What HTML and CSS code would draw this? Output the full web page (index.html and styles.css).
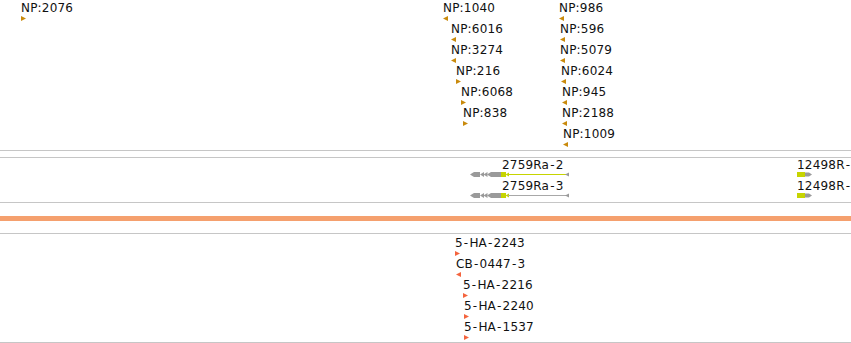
FILE: index.html
```html
<!DOCTYPE html>
<html>
<head>
<meta charset="utf-8">
<link rel="stylesheet" href="styles.css">
</head>
<body>
<div class="browser">
  <section class="track track-np">
    <div class="feat" style="left:21px;top:1px"><div class="lbl">NP:2076</div><svg class="tri np" width="5" height="5"><polygon points="0,0 5,2.5 0,5"/></svg></div>
    <div class="feat" style="left:443px;top:1px"><div class="lbl">NP:1040</div><svg class="tri np" width="5" height="5"><polygon points="5,0 0,2.5 5,5"/></svg></div>
    <div class="feat" style="left:559px;top:1px"><div class="lbl">NP:986</div><svg class="tri np" width="5" height="5"><polygon points="5,0 0,2.5 5,5"/></svg></div>
    <div class="feat" style="left:451px;top:22px"><div class="lbl">NP:6016</div><svg class="tri np" width="5" height="5"><polygon points="5,0 0,2.5 5,5"/></svg></div>
    <div class="feat" style="left:560px;top:22px"><div class="lbl">NP:596</div><svg class="tri np" width="5" height="5"><polygon points="5,0 0,2.5 5,5"/></svg></div>
    <div class="feat" style="left:451px;top:43px"><div class="lbl">NP:3274</div><svg class="tri np" width="5" height="5"><polygon points="5,0 0,2.5 5,5"/></svg></div>
    <div class="feat" style="left:560px;top:43px"><div class="lbl">NP:5079</div><svg class="tri np" width="5" height="5"><polygon points="5,0 0,2.5 5,5"/></svg></div>
    <div class="feat" style="left:456px;top:64px"><div class="lbl">NP:216</div><svg class="tri np" width="5" height="5"><polygon points="0,0 5,2.5 0,5"/></svg></div>
    <div class="feat" style="left:561px;top:64px"><div class="lbl">NP:6024</div><svg class="tri np" width="5" height="5"><polygon points="5,0 0,2.5 5,5"/></svg></div>
    <div class="feat" style="left:461px;top:85px"><div class="lbl">NP:6068</div><svg class="tri np" width="5" height="5"><polygon points="0,0 5,2.5 0,5"/></svg></div>
    <div class="feat" style="left:562px;top:85px"><div class="lbl">NP:945</div><svg class="tri np" width="5" height="5"><polygon points="5,0 0,2.5 5,5"/></svg></div>
    <div class="feat" style="left:463px;top:106px"><div class="lbl">NP:838</div><svg class="tri np" width="5" height="5"><polygon points="0,0 5,2.5 0,5"/></svg></div>
    <div class="feat" style="left:562px;top:106px"><div class="lbl">NP:2188</div><svg class="tri np" width="5" height="5"><polygon points="5,0 0,2.5 5,5"/></svg></div>
    <div class="feat" style="left:563px;top:127px"><div class="lbl">NP:1009</div><svg class="tri np" width="5" height="5"><polygon points="5,0 0,2.5 5,5"/></svg></div>
  </section>
  <div class="divider"></div>
  <section class="track track-genes">
    <div class="feat" style="left:470px;top:0px">
      <div class="lbl" style="margin-left:32px">2759Ra<span class="d">-</span>2</div>
      <svg class="gene" width="100" height="5" viewBox="0 0 100 5">
        <polygon class="g" points="0,2.5 4,0 10,0 10,5 4,5"/>
        <polygon class="g" points="10,2.5 14,0 14,5"/>
        <polygon class="g" points="13.5,2.5 17.5,0 17.5,5"/>
        <polygon class="g" points="17,2.5 21,0 21,5"/>
        <rect class="g" x="21" y="0" width="10" height="5"/>
        <rect class="y" x="31" y="0" width="5" height="5"/>
        <polygon class="y" points="35.5,2.5 39,0.5 39,4.5"/>
        <rect class="y" x="38" y="2" width="58" height="1"/>
        <polygon class="g" points="95,2.5 99,0.5 99,4.5"/>
      </svg>
    </div>
    <div class="feat" style="left:470px;top:21px">
      <div class="lbl" style="margin-left:32px">2759Ra<span class="d">-</span>3</div>
      <svg class="gene" width="100" height="5" viewBox="0 0 100 5">
        <polygon class="g" points="0,2.5 4,0 10,0 10,5 4,5"/>
        <polygon class="g" points="10,2.5 14,0 14,5"/>
        <polygon class="g" points="13.5,2.5 17.5,0 17.5,5"/>
        <polygon class="g" points="17,2.5 21,0 21,5"/>
        <rect class="g" x="21" y="0" width="10" height="5"/>
        <rect class="y" x="31" y="0" width="5" height="5"/>
        <polygon class="y" points="35.5,2.5 39,0.5 39,4.5"/>
        <rect class="l" x="38" y="2" width="58" height="1"/>
        <polygon class="g" points="95,2.5 99,0.5 99,4.5"/>
      </svg>
    </div>
    <div class="feat" style="left:797px;top:0px">
      <div class="lbl">12498R<span class="d">-</span></div>
      <svg class="gene" width="16" height="5" viewBox="0 0 16 5">
        <rect class="y" x="0" y="0" width="8" height="5"/>
        <polygon class="g" points="8,0.5 12,0.5 15,2.5 12,4.5 8,4.5"/>
      </svg>
    </div>
    <div class="feat" style="left:797px;top:21px">
      <div class="lbl">12498R<span class="d">-</span></div>
      <svg class="gene" width="16" height="5" viewBox="0 0 16 5">
        <rect class="y" x="0" y="0" width="8" height="5"/>
        <polygon class="g" points="8,0.5 12,0.5 15,2.5 12,4.5 8,4.5"/>
      </svg>
    </div>
  </section>
  <div class="band-area"><div class="band"></div></div>
  <section class="track track-ha">
    <div class="feat" style="left:455px;top:2px"><div class="lbl">5<span class="d">-</span>HA<span class="d">-</span>2243</div><svg class="tri ha" width="5" height="5"><polygon points="0,0 5,2.5 0,5"/></svg></div>
    <div class="feat" style="left:456px;top:23px"><div class="lbl">CB<span class="d">-</span>0447<span class="d">-</span>3</div><svg class="tri ha" width="5" height="5"><polygon points="5,0 0,2.5 5,5"/></svg></div>
    <div class="feat" style="left:463px;top:44px"><div class="lbl">5<span class="d">-</span>HA<span class="d">-</span>2216</div><svg class="tri ha" width="5" height="5"><polygon points="0,0 5,2.5 0,5"/></svg></div>
    <div class="feat" style="left:464px;top:65px"><div class="lbl">5<span class="d">-</span>HA<span class="d">-</span>2240</div><svg class="tri ha" width="5" height="5"><polygon points="0,0 5,2.5 0,5"/></svg></div>
    <div class="feat" style="left:464px;top:86px"><div class="lbl">5<span class="d">-</span>HA<span class="d">-</span>1537</div><svg class="tri ha" width="5" height="5"><polygon points="0,0 5,2.5 0,5"/></svg></div>
  </section>
</div>
</body>
</html>
```

FILE: styles.css
```css
html, body {
  margin: 0;
  padding: 0;
  background: #fff;
  overflow: hidden;
}
body {
  width: 851px;
  height: 343px;
  font-family: "DejaVu Sans", Verdana, sans-serif;
  font-size: 12px;
  color: #111;
}
.browser {
  display: flex;
  flex-direction: column;
  width: 851px;
}
.track {
  position: relative;
  overflow: hidden;
  border-bottom: 1px solid #c6c6c6;
}
.track-np { height: 150px; }
.divider {
  height: 6px;
  border-bottom: 1px solid #c6c6c6;
}
.track-genes { height: 44px; }
.band-area {
  padding: 13px 0 12px;
  border-bottom: 1px solid #c6c6c6;
}
.band {
  height: 5px;
  background: #f5a06e;
}
.track-ha { height: 108px; }
.feat {
  position: absolute;
  display: flex;
  flex-direction: column;
  align-items: flex-start;
}
.lbl {
  line-height: 14px;
  height: 14px;
  white-space: nowrap;
  letter-spacing: 0.2px;
}
.lbl .d {
  padding: 0 1px;
}
.tri { display: block; margin-top: 1px; }
.tri.np polygon { fill: #c98a0c; }
.tri.ha polygon { fill: #f4643e; }
.gene { display: block; }
.gene .g { fill: #9a9a9a; }
.gene .y { fill: #c6d400; }
.gene .l { fill: #a8a8a8; }
```
